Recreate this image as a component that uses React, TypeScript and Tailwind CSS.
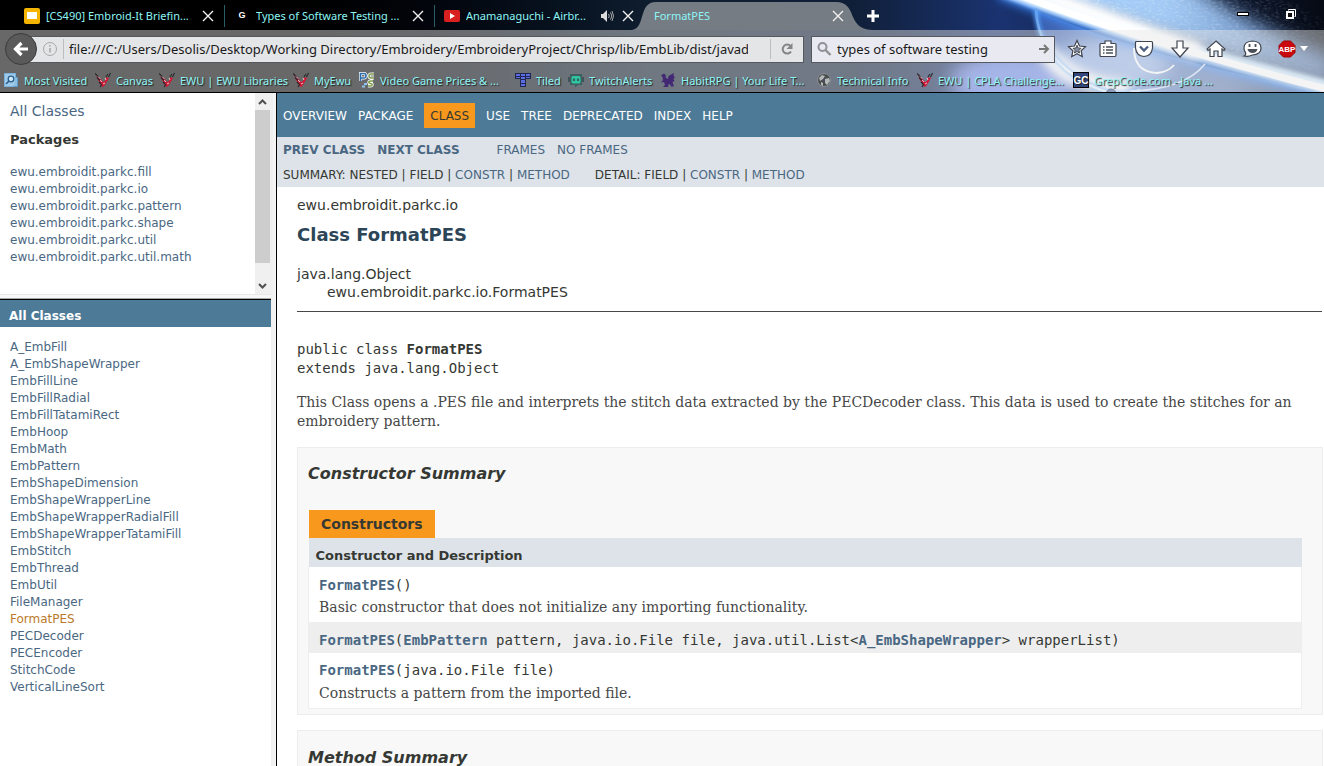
import React from 'react';

const ui = "font-['Noto_Sans','Open_Sans',sans-serif]";

function Bird() {
  return (
    <svg className="size-4 shrink-0" viewBox="0 0 16 16" aria-hidden="true">
      <path d="M1 3l3 2 3 4 1 1 2-1 1-4 1 1 2-1-1 3-2 3-1 2-2 2-2-1-1-3-2-3z" fill="#d01836" />
      <path d="M0 1.500l4 4M2 5.500l3 3M4 10l2 2M15.500 1l-2 4M13 2l-2 3M7 12l-2 3" stroke="#26282b" strokeWidth="1.100" fill="none" />
      <path d="M5 8l2 2M10 6l1 2M3 4.500l2 2M8 12l2-1" stroke="#eee" strokeWidth=".8" />
    </svg>
  );
}

const icons: Record<string, React.ReactNode> = {
  visited: (
    <svg className="size-4 shrink-0" viewBox="0 0 16 16" aria-hidden="true">
      <path d="M1.500 1.500h11v13h-11z" fill="#9fcbea" stroke="#79b2da" />
      <path d="M12.500 5.500h2v9h-4" fill="#8fc0e4" stroke="#5d9cc8" />
      <circle cx="8" cy="7" r="2.800" fill="#cfe8fa" stroke="#2a5f8c" strokeWidth="1.300" />
      <path d="M6 9l-3 3" stroke="#2a5f8c" strokeWidth="1.600" />
    </svg>
  ),
  bird: <Bird />,
  pc: (
    <svg className="size-4 shrink-0" viewBox="0 0 16 16" aria-hidden="true">
      <path d="M1.500 9V1.500h3.500q2 0 2 2.300T5 6H2M15 2h-3q-2 0-2 2t2 2h3M14 9h-2q-3 0-2 2l3 1q1 2-2 2H9" stroke="#fff" strokeWidth="3" fill="none" />
      <path d="M1.500 9V1.500h3.500q2 0 2 2.300T5 6H2" stroke="#2d6cab" strokeWidth="1.700" fill="none" />
      <path d="M15 2h-3q-2 0-2 2t2 2h3M14 9h-2q-3 0-2 2l3 1q1 2-2 2H9" stroke="#7c9a48" strokeWidth="1.400" fill="none" />
      <path d="M5 12h3M3 14.500h3" stroke="#8fc4ee" strokeWidth="2" />
    </svg>
  ),
  tiled: (
    <svg className="size-4 shrink-0" viewBox="0 0 16 16" aria-hidden="true">
      <path d="M0 1h16v6h-5v8H5V7H0z" fill="#20264f" />
      <path d="M1 2h4v2H1zM6 2h4v2H6zM11 2h4v2h-4zM1 5h4v1H1zM6 5h4v2H6zM11 5h4v1h-4zM6 8h4v3H6zM6 12h4v2H6z" fill="#5b6be0" />
    </svg>
  ),
  twitch: (
    <svg className="size-4 shrink-0" viewBox="0 0 16 16" aria-hidden="true">
      <path d="M2 2h12v11h-4l-3 2.500V13H2z" fill="#3e5e60" />
      <rect x="3.500" y="4" width="9" height="7.500" rx="1.500" fill="#31c3a2" />
      <path d="M6 6.500v2.500M10 6.500v2.500" stroke="#24464a" strokeWidth="1.500" />
      <path d="M1 5v5M15 5v5" stroke="#2f4b4e" strokeWidth="1.500" />
    </svg>
  ),
  habit: (
    <svg className="size-4 shrink-0" viewBox="0 0 16 16" aria-hidden="true">
      <path d="M1 3.500L4 1.500l2 2-.5 2L8 7l.5-3L14 1l-.500 3L15 5l-1.500 2 1 2-2 1 1.500 4.500h-3L10 12l-2 1 .5 2H3l2-2-1-3-3 .500L3 8 2.500 5z" fill="#432874" />
    </svg>
  ),
  globe: (
    <svg className="size-4 shrink-0" viewBox="0 0 16 16" aria-hidden="true">
      <circle cx="8" cy="8" r="6.500" fill="#4a4d50" stroke="#8d9194" />
      <path d="M3 6l3-3 3 1-2 3-3 2zM9 7l4-1 1 3-3 4-2-2zM5 10l2 1v3l-2-1z" fill="#b4b8ba" />
    </svg>
  ),
  gc: (
    <span className="flex size-4 shrink-0 items-center justify-center border border-black bg-[#34467e] font-['Liberation_Sans',sans-serif] text-[10px] font-bold text-white">
      GC
    </span>
  ),
};

const bookmarks: [string, string, string][] = [
  ['visited', 'Most Visited', 'w-[92px]'],
  ['bird', 'Canvas', 'w-[64px]'],
  ['bird', 'EWU | EWU Libraries', 'w-[134px]'],
  ['bird', 'MyEwu', 'w-[66px]'],
  ['pc', 'Video Game Prices & ...', 'w-[156px]'],
  ['tiled', 'Tiled', 'w-[53px]'],
  ['twitch', 'TwitchAlerts', 'w-[92px]'],
  ['habit', 'HabitRPG | Your Life T...', 'w-[156px]'],
  ['globe', 'Technical Info', 'w-[101px]'],
  ['bird', 'EWU | CPLA Challenge...', 'w-[156px]'],
  ['gc', 'GrepCode.com - Java ...', 'w-[156px]'],
];

function SpaceTheme() {
  return (
    <svg className="absolute inset-y-0 right-0 h-full w-[724px]" viewBox="600 0 724 92" preserveAspectRatio="none" aria-hidden="true">
      <defs>
        <linearGradient id="sky" x1="0" x2="1">
          <stop offset="0" stopColor="#0f1e30" stopOpacity="0" />
          <stop offset=".35" stopColor="#101f38" />
          <stop offset=".55" stopColor="#1a3370" />
          <stop offset=".8" stopColor="#101d3c" />
          <stop offset="1" stopColor="#060a14" />
        </linearGradient>
        <linearGradient id="planet" x1="0" x2="1">
          <stop offset="0" stopColor="#2a52a8" />
          <stop offset=".4" stopColor="#6a8ccc" />
          <stop offset=".7" stopColor="#6480b4" />
          <stop offset="1" stopColor="#34425e" />
        </linearGradient>
        <linearGradient id="haze" x1="0" x2="1">
          <stop offset="0" stopColor="#a5d2ff" />
          <stop offset=".5" stopColor="#a3caf5" />
          <stop offset="1" stopColor="#4f70a4" />
        </linearGradient>
        <linearGradient id="arc" x1="0" y1="0" x2="1" y2="1">
          <stop offset="0" stopColor="#8fc4ff" stopOpacity=".3" />
          <stop offset=".5" stopColor="#f4faff" />
          <stop offset="1" stopColor="#d5e8ff" />
        </linearGradient>
        <filter id="b2" x="-20%" y="-50%" width="140%" height="200%"><feGaussianBlur stdDeviation="2" /></filter>
        <filter id="b5" x="-20%" y="-50%" width="140%" height="200%"><feGaussianBlur stdDeviation="5" /></filter>
        <filter id="b9" x="-30%" y="-80%" width="160%" height="260%"><feGaussianBlur stdDeviation="9" /></filter>
        <filter id="b1"><feGaussianBlur stdDeviation=".7" /></filter>
        <filter id="grain" x="0" y="0" width="100%" height="100%">
          <feTurbulence type="fractalNoise" baseFrequency=".25 .5" numOctaves="3" seed="4" />
          <feColorMatrix values="0 0 0 0 .7  0 0 0 0 .85  0 0 0 0 1  2.200 0 0 0 -1" />
        </filter>
        <linearGradient id="fade" x1="0" x2="1">
          <stop offset="0" stopColor="#fff" />
          <stop offset=".6" stopColor="#999" />
          <stop offset="1" stopColor="#222" />
        </linearGradient>
        <mask id="upper"><path d="M1020 0Q1150 50 1324 90V20L1290 0z" fill="url(#fade)" /></mask>
      </defs>
      <path d="M600 0h724v92H600z" fill="url(#sky)" />
      <path d="M1035 0Q1030 60 1110 92H1324Q1150 60 1010 0z" fill="url(#planet)" />
      <path d="M1000-20Q1150 36 1334 88V56Q1250 26 1185-20z" fill="url(#haze)" filter="url(#b9)" />
      <g mask="url(#upper)"><rect x="1000" width="324" height="92" filter="url(#grain)" opacity=".6" /></g>
      <ellipse cx="1015" cy="82" rx="65" ry="30" fill="#7f9cff" filter="url(#b9)" opacity=".85" />
      <ellipse cx="1110" cy="64" rx="60" ry="26" fill="#b4cdf8" filter="url(#b9)" opacity=".7" />
      <path d="M1000-8Q1150 52 1334 94" stroke="#3b8cff" strokeWidth="12" fill="none" filter="url(#b5)" />
      <path d="M1000-12Q1150 43 1334 89" stroke="#d4ecff" strokeWidth="14" fill="none" filter="url(#b2)" />
      <path d="M1010-18Q1090 12 1200 52" stroke="#fff" strokeWidth="18" fill="none" filter="url(#b5)" />
      <path d="M1005-10Q1150 44 1334 91" stroke="#fff" strokeWidth="7" fill="none" filter="url(#b1)" />
      <path d="M1040 45Q1055 66 1075 76T1130 90" stroke="#fff" strokeWidth="18" fill="none" filter="url(#b5)" />
      <path d="M1036 10Q1038 50 1075 76T1140 90" stroke="#5aa8ff" strokeWidth="4" fill="none" filter="url(#b2)" />
      <path d="M1036 10Q1038 50 1075 76T1140 90" stroke="url(#arc)" strokeWidth="2.500" fill="none" filter="url(#b1)" />
      <path d="M1134 48Q1134 72 1157 73Q1168 72 1174 65" stroke="#fff" strokeWidth="1.800" fill="none" filter="url(#b1)" />
      <path d="M1130 91Q1184 90 1205 64" stroke="#d8e6ff" strokeWidth="1.500" fill="none" filter="url(#b1)" />
      <circle cx="1111" cy="94" r="5" fill="#45659c" stroke="#2b4068" />
    </svg>
  );
}

const tool = { fill: '#fff', stroke: '#3f444e', strokeWidth: 1.2 };

function ToolIcon({ label, children }: { label: string; children: React.ReactNode }) {
  return (
    <button aria-label={label} className="flex size-5 items-center justify-center">
      <svg className="size-5" viewBox="0 0 20 20" aria-hidden="true">{children}</svg>
    </button>
  );
}

function Close() {
  return (
    <button aria-label="Close tab" className="flex size-4 shrink-0 items-center justify-center">
      <svg className="size-3" viewBox="0 0 12 12" aria-hidden="true">
        <path d="M1 1l10 10M11 1L1 11" stroke="#f2f2f2" strokeWidth="1.400" />
      </svg>
    </button>
  );
}

function Browser() {
  return (
    <header className={`relative flex shrink-0 flex-col overflow-hidden border-b border-black bg-gradient-to-r from-black from-15% to-[#0f1e30] to-50% ${ui} text-[11px] text-[#8ef5f5]`}>
      <SpaceTheme />
      <div className="relative flex h-[30px] items-start pl-6">
        <div className="flex h-[30px] w-[200px] items-center gap-1.5 pt-0.5 pr-2">
          <svg className="size-4 shrink-0" viewBox="0 0 16 16" aria-hidden="true">
            <rect width="16" height="16" rx="2" fill="#f5b400" /><rect x="3" y="4" width="10" height="7" fill="#fff" />
          </svg>
          <span className="flex-1 truncate">[CS490] Embroid-It Briefin...</span>
          <Close />
        </div>
        <div className="flex h-[30px] w-[210px] items-center gap-1.5 pt-0.5 pr-2">
          <span className="mr-[3px] h-[22px] w-px bg-[#2c5c66]" />
          <span className="w-4 shrink-0 text-center font-['Liberation_Sans',sans-serif] text-[9px] font-bold text-white">G</span>
          <span className="flex-1 truncate">Types of Software Testing ...</span>
          <Close />
        </div>
        <div className="flex h-[30px] w-[202px] items-center gap-1.5 pt-0.5">
          <span className="mr-[3px] h-[22px] w-px bg-[#2c5c66]" />
          <svg className="h-3 w-4 shrink-0" viewBox="0 0 16 12" aria-hidden="true">
            <rect width="16" height="12" rx="2" fill="#d8201f" /><path d="M6 3l5 3-5 3z" fill="#fff" />
          </svg>
          <span className="flex-1 truncate">Anamanaguchi - Airbr...</span>
          <svg className="size-3.5 shrink-0" viewBox="0 0 14 14" aria-hidden="true">
            <path d="M1 5h2l4-4v12L3 9H1z" fill="#ddd" /><path d="M8.500 5q1.500 2 0 4M10.500 3.500q2.500 3.500 0 7M12 2q3 5 0 10" stroke="#aaa" fill="none" />
          </svg>
          <Close />
        </div>
        <div className="relative flex h-[30px] w-[210px] items-center gap-1.5 pt-0.5 pl-[18px]">
          <svg className="absolute top-0 -left-1 h-full w-[240px]" viewBox="0 0 240 30" preserveAspectRatio="none" aria-hidden="true">
            <path d="M0 30C14 28 6 2 24 2H204C226 2 214 29 240 30z" fill="#757c84" />
          </svg>
          <span className="relative flex-1 truncate">FormatPES</span>
          <span className="relative flex"><Close /></span>
        </div>
        <button aria-label="New tab" className="relative ml-[19px] flex h-8 items-center">
          <svg className="size-4" viewBox="0 0 16 16" aria-hidden="true"><path d="M8 2v12M2 8h12" stroke="#fff" strokeWidth="3" /></svg>
        </button>
        <span className="flex-1" />
        <button aria-label="Minimize" className="flex h-7 w-12 items-center justify-center">
          <svg className="size-3" viewBox="0 0 12 12" aria-hidden="true"><path d="M0 6h12" stroke="#000" strokeWidth="4" /><path d="M1 6h10" stroke="#fff" strokeWidth="2" /></svg>
        </button>
        <button aria-label="Restore" className="mr-[9px] flex h-7 w-12 items-center justify-center">
          <svg className="size-3" viewBox="0 0 12 12" aria-hidden="true">
            <path d="M3.500 2.500v-1h7v7h-1" stroke="#fff" fill="none" /><rect x="2" y="4" width="6" height="6" stroke="#fff" strokeWidth="2" fill="#111" />
          </svg>
        </button>
      </div>
      <div className="relative bg-[#e6e6e6]/45">
        <div className="flex h-[38px] items-center pr-4 pl-[5px]">
          <button aria-label="Back" className="z-10 flex size-8 shrink-0 items-center justify-center rounded-full border border-[#3c3c3c] bg-[#5a5a5a]">
            <svg className="size-5" viewBox="0 0 20 20" aria-hidden="true"><path d="M10.500 4L4.500 10l6 6M5 10h12" stroke="#fff" strokeWidth="3.200" fill="none" /></svg>
          </button>
          <div className="-ml-2 flex h-[27px] min-w-0 flex-1 items-center border border-[#55585c] bg-[#e4e5e7] pl-3">
            <svg className="size-4 shrink-0" viewBox="0 0 16 16" aria-hidden="true">
              <circle cx="8" cy="8" r="6.500" stroke="#a8a8a8" fill="none" /><path d="M8 7v4.500M8 4v1.600" stroke="#a8a8a8" strokeWidth="1.600" />
            </svg>
            <span className="ml-[5px] h-5 w-px bg-[#bdbdbd]" />
            <input aria-label="Address" readOnly defaultValue="file:///C:/Users/Desolis/Desktop/Working Directory/Embroidery/EmbroideryProject/Chrisp/lib/EmbLib/dist/javadoc/index.html" className="mr-[22px] ml-[5px] min-w-0 flex-1 bg-transparent pt-0.5 text-[13px] text-[#1a1a1a] outline-none" />
            <span className="h-5 w-px bg-[#bdbdbd]" />
            <button aria-label="Reload" className="flex w-8 items-center justify-center">
              <svg className="size-4" viewBox="0 0 16 16" aria-hidden="true"><path d="M12 10.500A4.500 4.500 0 1 1 11.500 5" stroke="#858585" strokeWidth="2" fill="none" /><path d="M13.500 2v6h-6z" fill="#858585" /></svg>
            </button>
          </div>
          <div className="ml-[7px] flex h-[27px] w-[244px] shrink-0 items-center border border-[#55585c] bg-[#e9eaf1] px-1">
            <svg className="size-4 shrink-0" viewBox="0 0 16 16" aria-hidden="true"><circle cx="6.500" cy="6" r="4" stroke="#8f9094" strokeWidth="2" fill="none" /><path d="M9.500 9l5 5" stroke="#8f9094" strokeWidth="2.400" /></svg>
            <input aria-label="Search" readOnly defaultValue="types of software testing" className="ml-[5px] min-w-0 flex-1 bg-transparent pt-0.5 text-[13px] text-[#1a1a1a] outline-none" />
            <button aria-label="Go" className="flex"><svg className="size-3" viewBox="0 0 12 12" aria-hidden="true"><path d="M1 6h8M6 2l4 4-4 4" stroke="#777" strokeWidth="2" fill="none" /></svg></button>
          </div>
          <div className="ml-3 flex shrink-0 items-center gap-4">
            <div className="flex gap-[11px]">
              <ToolIcon label="Bookmark"><path d="M10 1.500l2.500 5.500 6 .7-4.400 4 1.200 6L10 14.700l-5.300 3 1.200-6-4.400-4 6-.7z" {...tool} /><path d="M10 6.300l1.200 2.700 2.800.3-2 2 .5 2.700-2.500-1.400L7.500 14l.5-2.700-2-2 2.800-.3z" fill="#828ba0" stroke="#4a4f58" /></ToolIcon>
              <ToolIcon label="Bookmarks list"><path d="M3 4.500h4V2h6v2.500h4q1 0 1 1V16q0 1.500-1 1.500H3Q2 17.500 2 16V5.500q0-1 1-1z" {...tool} /><path d="M5 8h1.500M8 8h7M5 11h1.500M8 11h7M5 14h1.500M8 14h7" stroke="#4a4f58" strokeWidth="1.500" /></ToolIcon>
            </div>
            <ToolIcon label="Pocket"><path d="M2.500 2.500h15q1 0 1 1V9q-1 8-8.500 8.500Q2.500 17 1.500 9V3.500q0-1 1-1z" {...tool} /><path d="M6 7.500l4 4 4-4" stroke="#4a5e80" strokeWidth="2.400" fill="none" /></ToolIcon>
            <ToolIcon label="Downloads"><path d="M7 2h6v7h5l-8 9-8-9h5z" {...tool} /></ToolIcon>
            <ToolIcon label="Home"><path d="M10 2l9 8-1 1.500-2-1.500v7.500h-4V12H8v5.500H4V10l-2 1.500L1 10z" {...tool} /></ToolIcon>
            <ToolIcon label="Chat"><path d="M10.500 2q8.500.5 8.500 7t-8.500 7Q6 18 2 17q2.500-1 1.500-3.500Q2 12 2 9q0-6.500 8.500-7z" {...tool} /><path d="M7.500 5v3M13.500 5v3" stroke="#4a4f58" strokeWidth="1.800" /><path d="M5.500 10h10q-1 4-5 4t-5-4z" fill="#4a4f58" /></ToolIcon>
            <button aria-label="Adblock" className="flex items-center gap-1">
              <svg className="size-[18px]" viewBox="0 0 18 18" aria-hidden="true"><path d="M5.500 1h7L17 5.500v7L12.500 17h-7L1 12.500v-7z" fill="#c9090c" stroke="#9c0508" /><text x="9" y="12" fontSize="8" fontWeight="700" fontFamily="Liberation Sans, sans-serif" fill="#fff" textAnchor="middle">ABP</text></svg>
              <svg className="h-1.5 w-2" viewBox="0 0 8 6" aria-hidden="true"><path d="M0 0h8L4 5z" fill="#fff" /></svg>
            </button>
          </div>
        </div>
        <nav aria-label="Bookmarks" className="flex h-6 items-center pl-[3px]">
          {bookmarks.map(([icon, label, width]) => (
            <a key={label} href="#" className={`flex shrink-0 items-center gap-[5px] whitespace-nowrap [text-shadow:1px_1px_1px_#222] ${width}`}>
              {icons[icon]}
              <span className="pt-0.5">{label}</span>
            </a>
          ))}
        </nav>
      </div>
    </header>
  );
}

const packages = ['fill', 'io', 'pattern', 'shape', 'util', 'util.math'];
const classes = ['A_EmbFill', 'A_EmbShapeWrapper', 'EmbFillLine', 'EmbFillRadial', 'EmbFillTatamiRect', 'EmbHoop', 'EmbMath', 'EmbPattern', 'EmbShapeDimension', 'EmbShapeWrapperLine', 'EmbShapeWrapperRadialFill', 'EmbShapeWrapperTatamiFill', 'EmbStitch', 'EmbThread', 'EmbUtil', 'FileManager', 'FormatPES', 'PECDecoder', 'PECEncoder', 'StitchCode', 'VerticalLineSort'];

function Sidebar() {
  return (
    <aside className="flex w-[271px] shrink-0 flex-col bg-white">
      <div className="flex h-[201px] shrink-0">
        <div className="flex-1 pl-2.5 pt-2">
          <a href="#" className="block text-sm leading-5 text-[#4A6782]">All Classes</a>
          <h2 className="mt-[9px] text-[13px] leading-5 font-bold">Packages</h2>
          <ul className="mt-3.5 text-xs leading-[17px] text-[#4A6782]">
            {packages.map((p) => <li key={p}><a href="#">ewu.embroidit.parkc.{p}</a></li>)}
          </ul>
        </div>
        <div className="flex w-4 flex-col items-center bg-[#f0f0f0]">
          <svg className="h-[17px] w-4" viewBox="0 0 16 17" aria-hidden="true"><path d="M4 11l3.500-3.500L11 11" stroke="#505050" strokeWidth="2" fill="none" /></svg>
          <div className="h-[153px] w-full border-r border-[#f0f0f0] bg-[#cdcdcd]" />
          <svg className="mt-auto h-[17px] w-4" viewBox="0 0 16 17" aria-hidden="true"><path d="M4 7l3.500 3.500L11 7" stroke="#505050" strokeWidth="2" fill="none" /></svg>
        </div>
      </div>
      <div className="h-[5px] shrink-0 border-t border-b border-t-[#e8e8e8] border-b-[#a8a8a8] bg-[#f8f8f8]" />
      <h2 className="h-7 shrink-0 border-t border-black bg-[#4D7A97] pl-[9px] text-xs leading-8 font-bold text-white">All Classes</h2>
      <ul className="mt-3 pl-2.5 text-xs leading-[17px] text-[#4A6782]">
        {classes.map((c) => <li key={c}><a href="#" className={c === 'FormatPES' ? 'text-[#bb7a2a]' : ''}>{c}</a></li>)}
      </ul>
    </aside>
  );
}

const code = "font-['DejaVu_Sans_Mono',monospace] text-sm";
const serif = "font-['DejaVu_Serif',serif] text-sm text-[#474747]";
const link = 'text-[#4A6782]';

function Sum({ children }: { children: React.ReactNode }) {
  return <a href="#" className={link}>{children}</a>;
}

const navItem = 'pt-[5px] pb-[3px]';

function Doc() {
  return (
    <main className="min-w-0 flex-1 overflow-hidden bg-white">
      <nav aria-label="Sections" className="flex h-11 items-start gap-[11px] bg-[#4D7A97] pt-2.5 pl-1.5 text-xs leading-[17px] text-white">
        <a href="#" className={navItem}>OVERVIEW</a>
        <a href="#" className={navItem}>PACKAGE</a>
        <span className={`bg-[#F8981D] px-1.5 text-[#353833] ${navItem}`}>CLASS</span>
        {['USE', 'TREE', 'DEPRECATED', 'INDEX', 'HELP'].map((t) => <a key={t} href="#" className={navItem}>{t}</a>)}
      </nav>
      <div className="h-[50px] bg-[#dee3e9] pt-px pl-1.5 text-xs leading-[25px]">
        <div className={`flex gap-3 ${link}`}>
          <a href="#" className="font-bold">PREV CLASS</a>
          <a href="#" className="font-bold">NEXT CLASS</a>
          <a href="#" className="ml-[25px]">FRAMES</a>
          <a href="#">NO FRAMES</a>
        </div>
        <div className="flex gap-[25px]">
          <span>SUMMARY: NESTED | FIELD | <Sum>CONSTR</Sum> | <Sum>METHOD</Sum></span>
          <span>DETAIL: FIELD | <Sum>CONSTR</Sum> | <Sum>METHOD</Sum></span>
        </div>
      </div>
      <div className="pt-2 pr-px pl-5 text-sm">
        <div className="leading-5">ewu.embroidit.parkc.io</div>
        <h1 className="mt-2 text-lg leading-6 font-bold text-[#2c4557]">Class FormatPES</h1>
        <div className="mt-[18px] leading-[18px]">java.lang.Object</div>
        <div className="pl-[30px] leading-[18px]">ewu.embroidit.parkc.io.FormatPES</div>
        <hr className="mt-2.5 mr-px border-t border-[#474747]" />
        <pre className={`mt-7 leading-[19px] ${code}`}>public class <b>FormatPES</b>{'\n'}extends java.lang.Object</pre>
        <p className={`mt-[15px] leading-[19px] ${serif}`}>
          This Class opens a .PES file and interprets the stitch data extracted by the PECDecoder class. This data is used to create the stitches for an embroidery pattern.
        </p>
        <section className="mt-4 border border-[#ededed] bg-[#f8f8f8] pt-4 pr-5 pb-[5px] pl-2.5">
          <h2 className="text-base leading-5 font-bold italic">Constructor Summary</h2>
          <table className="mt-[26px] w-full border-collapse text-left">
            <caption className="pl-px text-left">
              <span className="inline-block h-7 bg-[#F8981D] px-3 align-top leading-7 font-bold text-[#353833]">Constructors</span>
            </caption>
            <thead>
              <tr className="h-[29px] bg-[#dee3e9]"><th className="pt-[7px] pl-[7px] text-[13px] leading-5 font-bold">Constructor and Description</th></tr>
            </thead>
            <tbody className="border border-t-0 border-[#eee] bg-white">
              <tr>
                <td className="pt-2 pb-[5px] pl-2.5">
                  <div className={`leading-5 ${code}`}><a href="#" className={`font-bold ${link}`}>FormatPES</a>()</div>
                  <div className={`mt-[3px] leading-[19px] ${serif}`}>Basic constructor that does not initialize any importing functionality.</div>
                </td>
              </tr>
              <tr className="bg-[#eeeeef]">
                <td className="pt-2 pb-[3px] pl-2.5">
                  <div className={`leading-5 ${code}`}>
                    <a href="#" className={`font-bold ${link}`}>FormatPES</a>(<a href="#" className={`font-bold ${link}`}>EmbPattern</a> pattern, java.io.File file, java.util.List&lt;<a href="#" className={`font-bold ${link}`}>A_EmbShapeWrapper</a>&gt; wrapperList)
                  </div>
                </td>
              </tr>
              <tr>
                <td className="pt-[7px] pb-[5px] pl-2.5">
                  <div className={`leading-5 ${code}`}><a href="#" className={`font-bold ${link}`}>FormatPES</a>(java.io.File file)</div>
                  <div className={`mt-1 leading-[19px] ${serif}`}>Constructs a pattern from the imported file.</div>
                </td>
              </tr>
            </tbody>
          </table>
        </section>
        <section className="mt-[15px] h-60 border border-[#ededed] bg-[#f8f8f8] pt-[17px] pl-2.5">
          <h2 className="text-base leading-5 font-bold italic">Method Summary</h2>
        </section>
      </div>
    </main>
  );
}

export default function App() {
  return (
    <div className="flex h-screen flex-col overflow-hidden bg-white font-['DejaVu_Sans',sans-serif] text-[#353833]">
      <Browser />
      <div className="flex min-h-0 flex-1 overflow-hidden">
        <Sidebar />
        <div className="w-1.5 shrink-0 border-r border-l-2 border-r-black border-l-[#f0f0f0] bg-[#f4f4f4]" />
        <Doc />
      </div>
    </div>
  );
}
